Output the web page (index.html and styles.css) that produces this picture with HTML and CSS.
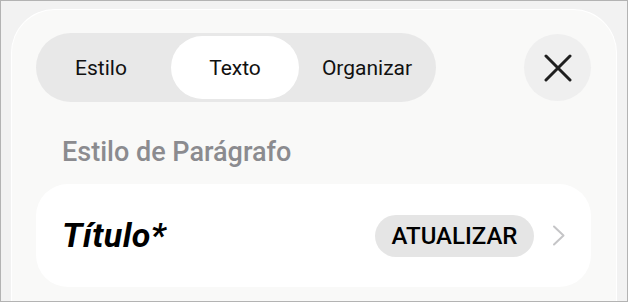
FILE: index.html
```html
<!DOCTYPE html>
<html lang="pt">
<head>
<meta charset="utf-8">
<link rel="stylesheet" href="styles.css">
</head>
<body>
<div class="frame">
  <div class="panel">
    <div class="header">
      <div class="segmented">
        <div class="seg seg-estilo">Estilo</div>
        <div class="seg seg-texto active">Texto</div>
        <div class="seg seg-org">Organizar</div>
      </div>
      <div class="close">
        <svg width="28" height="28" viewBox="0 0 28 28"><path d="M2 2 L26 26 M26 2 L2 26" stroke="#1f1f1f" stroke-width="3" stroke-linecap="round" fill="none"/></svg>
      </div>
    </div>
    <div class="section-title">Estilo de Parágrafo</div>
    <div class="card">
      <div class="style-name">Título*</div>
      <div class="update">ATUALIZAR</div>
      <svg class="chevron" width="14" height="21" viewBox="0 0 14 21"><path d="M2 1.5 L11.5 10.5 L2 19.5" stroke="#c5c5c7" stroke-width="2" stroke-linecap="round" stroke-linejoin="round" fill="none"/></svg>
    </div>
  </div>
</div>
</body>
</html>
```
FILE: styles.css
```css
html, body {
  margin: 0;
  padding: 0;
  background: #ffffff;
}
body {
  font-family: Roboto, "Liberation Sans", sans-serif;
}
.frame {
  box-sizing: border-box;
  width: 628px;
  height: 302px;
  border: 1px solid #b3b3b3;
  background: #f2f2f2;
  padding: 8px 10px 0 10px;
  overflow: hidden;
}
.panel {
  box-sizing: border-box;
  height: 320px;
  border: 1px solid #ffffff;
  border-bottom: none;
  border-radius: 44px 44px 0 0;
  background: #f9f9f8;
  padding: 23px 25px 0 24px;
}
.header {
  display: flex;
  align-items: center;
  justify-content: space-between;
}
.segmented {
  box-sizing: border-box;
  display: flex;
  width: 400px;
  height: 69px;
  padding: 3px;
  border-radius: 35px;
  background: #e8e8e8;
}
.seg {
  display: flex;
  align-items: center;
  justify-content: center;
  font-size: 21px;
  color: #111111;
  border-radius: 32px;
}
.seg-estilo { width: 124px; margin-right: 8px; }
.seg-texto { width: 128px; }
.seg-org { width: 134px; padding-left: 2px; box-sizing: border-box; }
.seg.active {
  background: #ffffff;
}
.close {
  width: 67px;
  height: 67px;
  border-radius: 50%;
  background: #efefef;
  display: flex;
  align-items: center;
  justify-content: center;
}
.section-title {
  margin-top: 34px;
  font-size: 27px;
  line-height: 32px;
  font-weight: 500;
  color: #8b8b8f;
  padding-left: 26px;
}
.card {
  margin-top: 16px;
  height: 103px;
  border-radius: 32px;
  background: #ffffff;
  display: flex;
  align-items: center;
  padding: 0 25px 0 26px;
}
.style-name {
  flex: 1;
  font-size: 34px;
  letter-spacing: 0.4px;
  font-weight: 700;
  font-style: italic;
  color: #000000;
  padding-bottom: 1px;
}
.update {
  height: 42px;
  width: 159px;
  border-radius: 21px;
  background: #e5e5e5;
  display: flex;
  align-items: center;
  justify-content: center;
  font-size: 24px;
  font-weight: 500;
  color: #000000;
}
.chevron {
  margin-left: 18px;
  display: block;
}
```
